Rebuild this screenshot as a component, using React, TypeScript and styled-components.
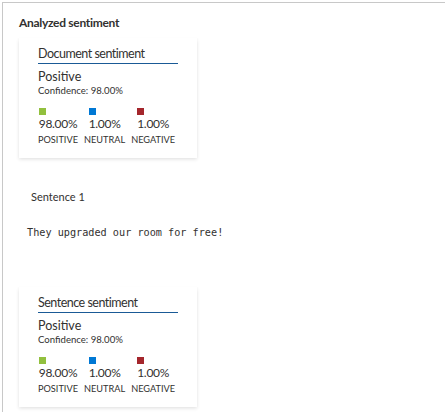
import React from "react";
import styled, { createGlobalStyle } from "styled-components";

const Global = createGlobalStyle`
  html, body { margin: 0; padding: 0; background: #ffffff; }
  body { padding: 2px 0 0 2px; font-family: Lato, "Segoe UI", sans-serif; color: #323130; }
  * { box-sizing: border-box; }
`;

const Frame = styled.div`
  border-top: 1px solid #c8c8c8;
  border-left: 1px solid #c8c8c8;
  min-height: 410px;
  padding: 12px 16px 0 16px;
`;

const Heading = styled.div`
  font-size: 12px;
  line-height: 16px;
  font-weight: 700;
  letter-spacing: -0.3px;
  margin-bottom: 7px;
`;

const Card = styled.div`
  width: 178px;
  background: #fff;
  padding: 8px 19px 12px 19px;
  box-shadow: 0 1.6px 3.6px rgba(0, 0, 0, 0.12), 0 0.3px 0.9px rgba(0, 0, 0, 0.1);
`;

const CardTitle = styled.div`
  font-size: 12.5px;
  letter-spacing: -0.5px;
  line-height: 16px;
  padding-bottom: 1px;
  border-bottom: 1.5px solid #1a5a96;
  margin-bottom: 5px;
`;

const Polarity = styled.div`
  font-size: 12.5px;
  line-height: 15px;
`;

const Confidence = styled.div`
  font-size: 9.6px;
  line-height: 13px;
  margin-bottom: 11px;
`;

const Scores = styled.div`
  display: flex;
  gap: 6px;
`;

const ScoreCol = styled.div`
  display: flex;
  flex-direction: column;
  align-items: center;
`;

const ValueBlock = styled.div`
  display: flex;
  flex-direction: column;
  align-items: flex-start;
`;

const Swatch = styled.div<{ $color: string }>`
  width: 7px;
  height: 7px;
  background: ${(p) => p.$color};
  margin-bottom: 1px;
`;

const Value = styled.div`
  font-size: 12px;
  letter-spacing: -0.3px;
  line-height: 15px;
  margin-bottom: 3px;
`;

const ScoreLabel = styled.div`
  font-size: 9.2px;
  line-height: 12px;
`;

const SentenceLabel = styled.div`
  font-size: 11px;
  line-height: 15px;
  padding-left: 12px;
  margin-top: 31px;
`;

const SentenceText = styled.pre`
  font-family: "DejaVu Sans Mono", "Liberation Mono", monospace;
  font-size: 10.2px;
  line-height: 14px;
  margin: 22px 0 47px 8px;
`;

type Score = { value: string; label: string; color: string };

const scores: Score[] = [
  { value: "98.00%", label: "POSITIVE", color: "#92c03e" },
  { value: "1.00%", label: "NEUTRAL", color: "#0078d4" },
  { value: "1.00%", label: "NEGATIVE", color: "#a4262c" },
];

function SentimentCard({ title }: { title: string }) {
  return (
    <Card>
      <CardTitle>{title}</CardTitle>
      <Polarity>Positive</Polarity>
      <Confidence>Confidence: 98.00%</Confidence>
      <Scores>
        {scores.map((s) => (
          <ScoreCol key={s.label}>
            <ValueBlock>
              <Swatch $color={s.color} />
              <Value>{s.value}</Value>
            </ValueBlock>
            <ScoreLabel>{s.label}</ScoreLabel>
          </ScoreCol>
        ))}
      </Scores>
    </Card>
  );
}

export default function App() {
  return (
    <>
      <Global />
      <Frame>
        <Heading>Analyzed sentiment</Heading>
        <SentimentCard title="Document sentiment" />
        <SentenceLabel>Sentence 1</SentenceLabel>
        <SentenceText>They upgraded our room for free!</SentenceText>
        <SentimentCard title="Sentence sentiment" />
      </Frame>
    </>
  );
}
